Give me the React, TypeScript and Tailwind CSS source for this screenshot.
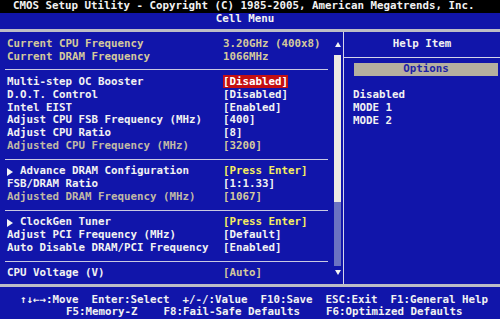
import React from "react";

type Row =
  | { kind: "sep" }
  | {
      kind: "item";
      label: string;
      value: string;
      labelColor?: string;
      valueColor?: string;
      arrow?: boolean;
      selected?: boolean;
    };

const WHITE = "text-[#f2f2f2]";
const TAN = "text-[#d4c99c]";
const DIM = "text-[#c0b9a6]";
const YELLOW = "text-[#f6ee5e]";

const rows: Row[] = [
  { kind: "item", label: "Current CPU Frequency", value: "3.20GHz (400x8)", labelColor: TAN, valueColor: TAN },
  { kind: "item", label: "Current DRAM Frequency", value: "1066MHz", labelColor: TAN, valueColor: TAN },
  { kind: "sep" },
  { kind: "item", label: "Multi-step OC Booster", value: "[Disabled]", selected: true },
  { kind: "item", label: "D.O.T. Control", value: "[Disabled]" },
  { kind: "item", label: "Intel EIST", value: "[Enabled]" },
  { kind: "item", label: "Adjust CPU FSB Frequency (MHz)", value: "[400]" },
  { kind: "item", label: "Adjust CPU Ratio", value: "[8]" },
  { kind: "item", label: "Adjusted CPU Frequency (MHz)", value: "[3200]", labelColor: DIM, valueColor: TAN },
  { kind: "sep" },
  { kind: "item", label: "Advance DRAM Configuration", value: "[Press Enter]", arrow: true, valueColor: YELLOW },
  { kind: "item", label: "FSB/DRAM Ratio", value: "[1:1.33]" },
  { kind: "item", label: "Adjusted DRAM Frequency (MHz)", value: "[1067]", labelColor: DIM, valueColor: TAN },
  { kind: "sep" },
  { kind: "item", label: "ClockGen Tuner", value: "[Press Enter]", arrow: true, valueColor: YELLOW },
  { kind: "item", label: "Adjust PCI Frequency (MHz)", value: "[Default]" },
  { kind: "item", label: "Auto Disable DRAM/PCI Frequency", value: "[Enabled]" },
  { kind: "sep" },
  { kind: "item", label: "CPU Voltage (V)", value: "[Auto]", valueColor: TAN },
];

const Triangle: React.FC<{ dir: "up" | "down" | "right" }> = ({ dir }) => {
  const pts =
    dir === "up" ? "0,5 6,5 3,0" : dir === "down" ? "0,0 6,0 3,5" : "0,0 0,8 6,4";
  const w = 6;
  const h = dir === "right" ? 8 : 5;
  return (
    <svg width={w} height={h} viewBox={`0 0 ${w} ${h}`}>
      <polygon points={pts} fill="#f4f4f4" />
    </svg>
  );
};

const App: React.FC = () => {
  return (
    <div className="w-[500px] h-[319px] overflow-hidden bg-[#1115aa] font-['DejaVu_Sans_Mono','Liberation_Mono',monospace] font-bold text-[10.8px] leading-[12.76px] text-[#f2f2f2]">
      {/* Title bar */}
      <div className="h-[12.8px] bg-black pl-[13px] whitespace-pre">
        CMOS Setup Utility - Copyright (C) 1985-2005, American Megatrends, Inc.
      </div>
      <div className="h-[16.2px] leading-[11px] text-center pr-[10px]">Cell Menu</div>
      <div className="h-[3px] bg-[#bdbdc6]" />

      {/* Main area */}
      <div className="h-[252px] flex">
        {/* Settings list */}
        <div className="w-[334px] pt-[6px]">
          {rows.map((r, i) =>
            r.kind === "sep" ? (
              <div key={i} className="h-[12.76px] flex items-center pl-[5px]">
                <div className="w-[323px] h-px bg-[#c9c9e2]" />
              </div>
            ) : (
              <div key={i} className="h-[12.76px] flex whitespace-pre">
                <div className={`w-[223px] shrink-0 pl-[7px] flex ${r.labelColor ?? WHITE}`}>
                  {r.arrow && (
                    <span className="w-[13px] flex items-center">
                      <Triangle dir="right" />
                    </span>
                  )}
                  <span>{r.label}</span>
                </div>
                <div>
                  <span className={r.selected ? "bg-[#c40f12] text-white" : r.valueColor ?? WHITE}>
                    {r.value}
                  </span>
                </div>
              </div>
            )
          )}
        </div>

        {/* Scrollbar */}
        <div className="w-[7px] flex flex-col pt-[6px]">
          <div className="h-[12.76px] flex items-center justify-center">
            <Triangle dir="up" />
          </div>
          <div className="mt-[4px] h-[147px] bg-[#eeebe2]" />
          <div className="h-[64px] bg-[#6b72c2]" />
          <div className="h-[13px] flex items-center justify-center">
            <Triangle dir="down" />
          </div>
        </div>

        <div className="w-[2px]" />
        <div className="w-px bg-[#d6d6ea]" />

        {/* Help panel */}
        <div className="flex-1 pt-[6px]">
          <div className="h-[12.76px] text-center">Help Item</div>
          <div className="h-[12.76px] flex items-center">
            <div className="w-full h-px bg-[#d6d6ea]" />
          </div>
          <div className="h-[12.76px] ml-[10px] mr-[2px] bg-[#b5b09f] text-center text-[#1d22a6]">
            Options
          </div>
          <div className="h-[12.76px]" />
          <div className="pl-[9px]">
            <div>Disabled</div>
            <div>MODE 1</div>
            <div>MODE 2</div>
          </div>
        </div>
      </div>

      <div className="h-[3px] bg-[#bdbdc6]" />

      {/* Key legend */}
      <div className="pt-[6.6px] whitespace-pre">
        <div className="pl-[20px]">↑↓←→:Move  Enter:Select  +/-/:Value  F10:Save  ESC:Exit  F1:General Help</div>
        <div className="pl-[66px]">F5:Memory-Z    F8:Fail-Safe Defaults    F6:Optimized Defaults</div>
      </div>
    </div>
  );
};

export default App;
